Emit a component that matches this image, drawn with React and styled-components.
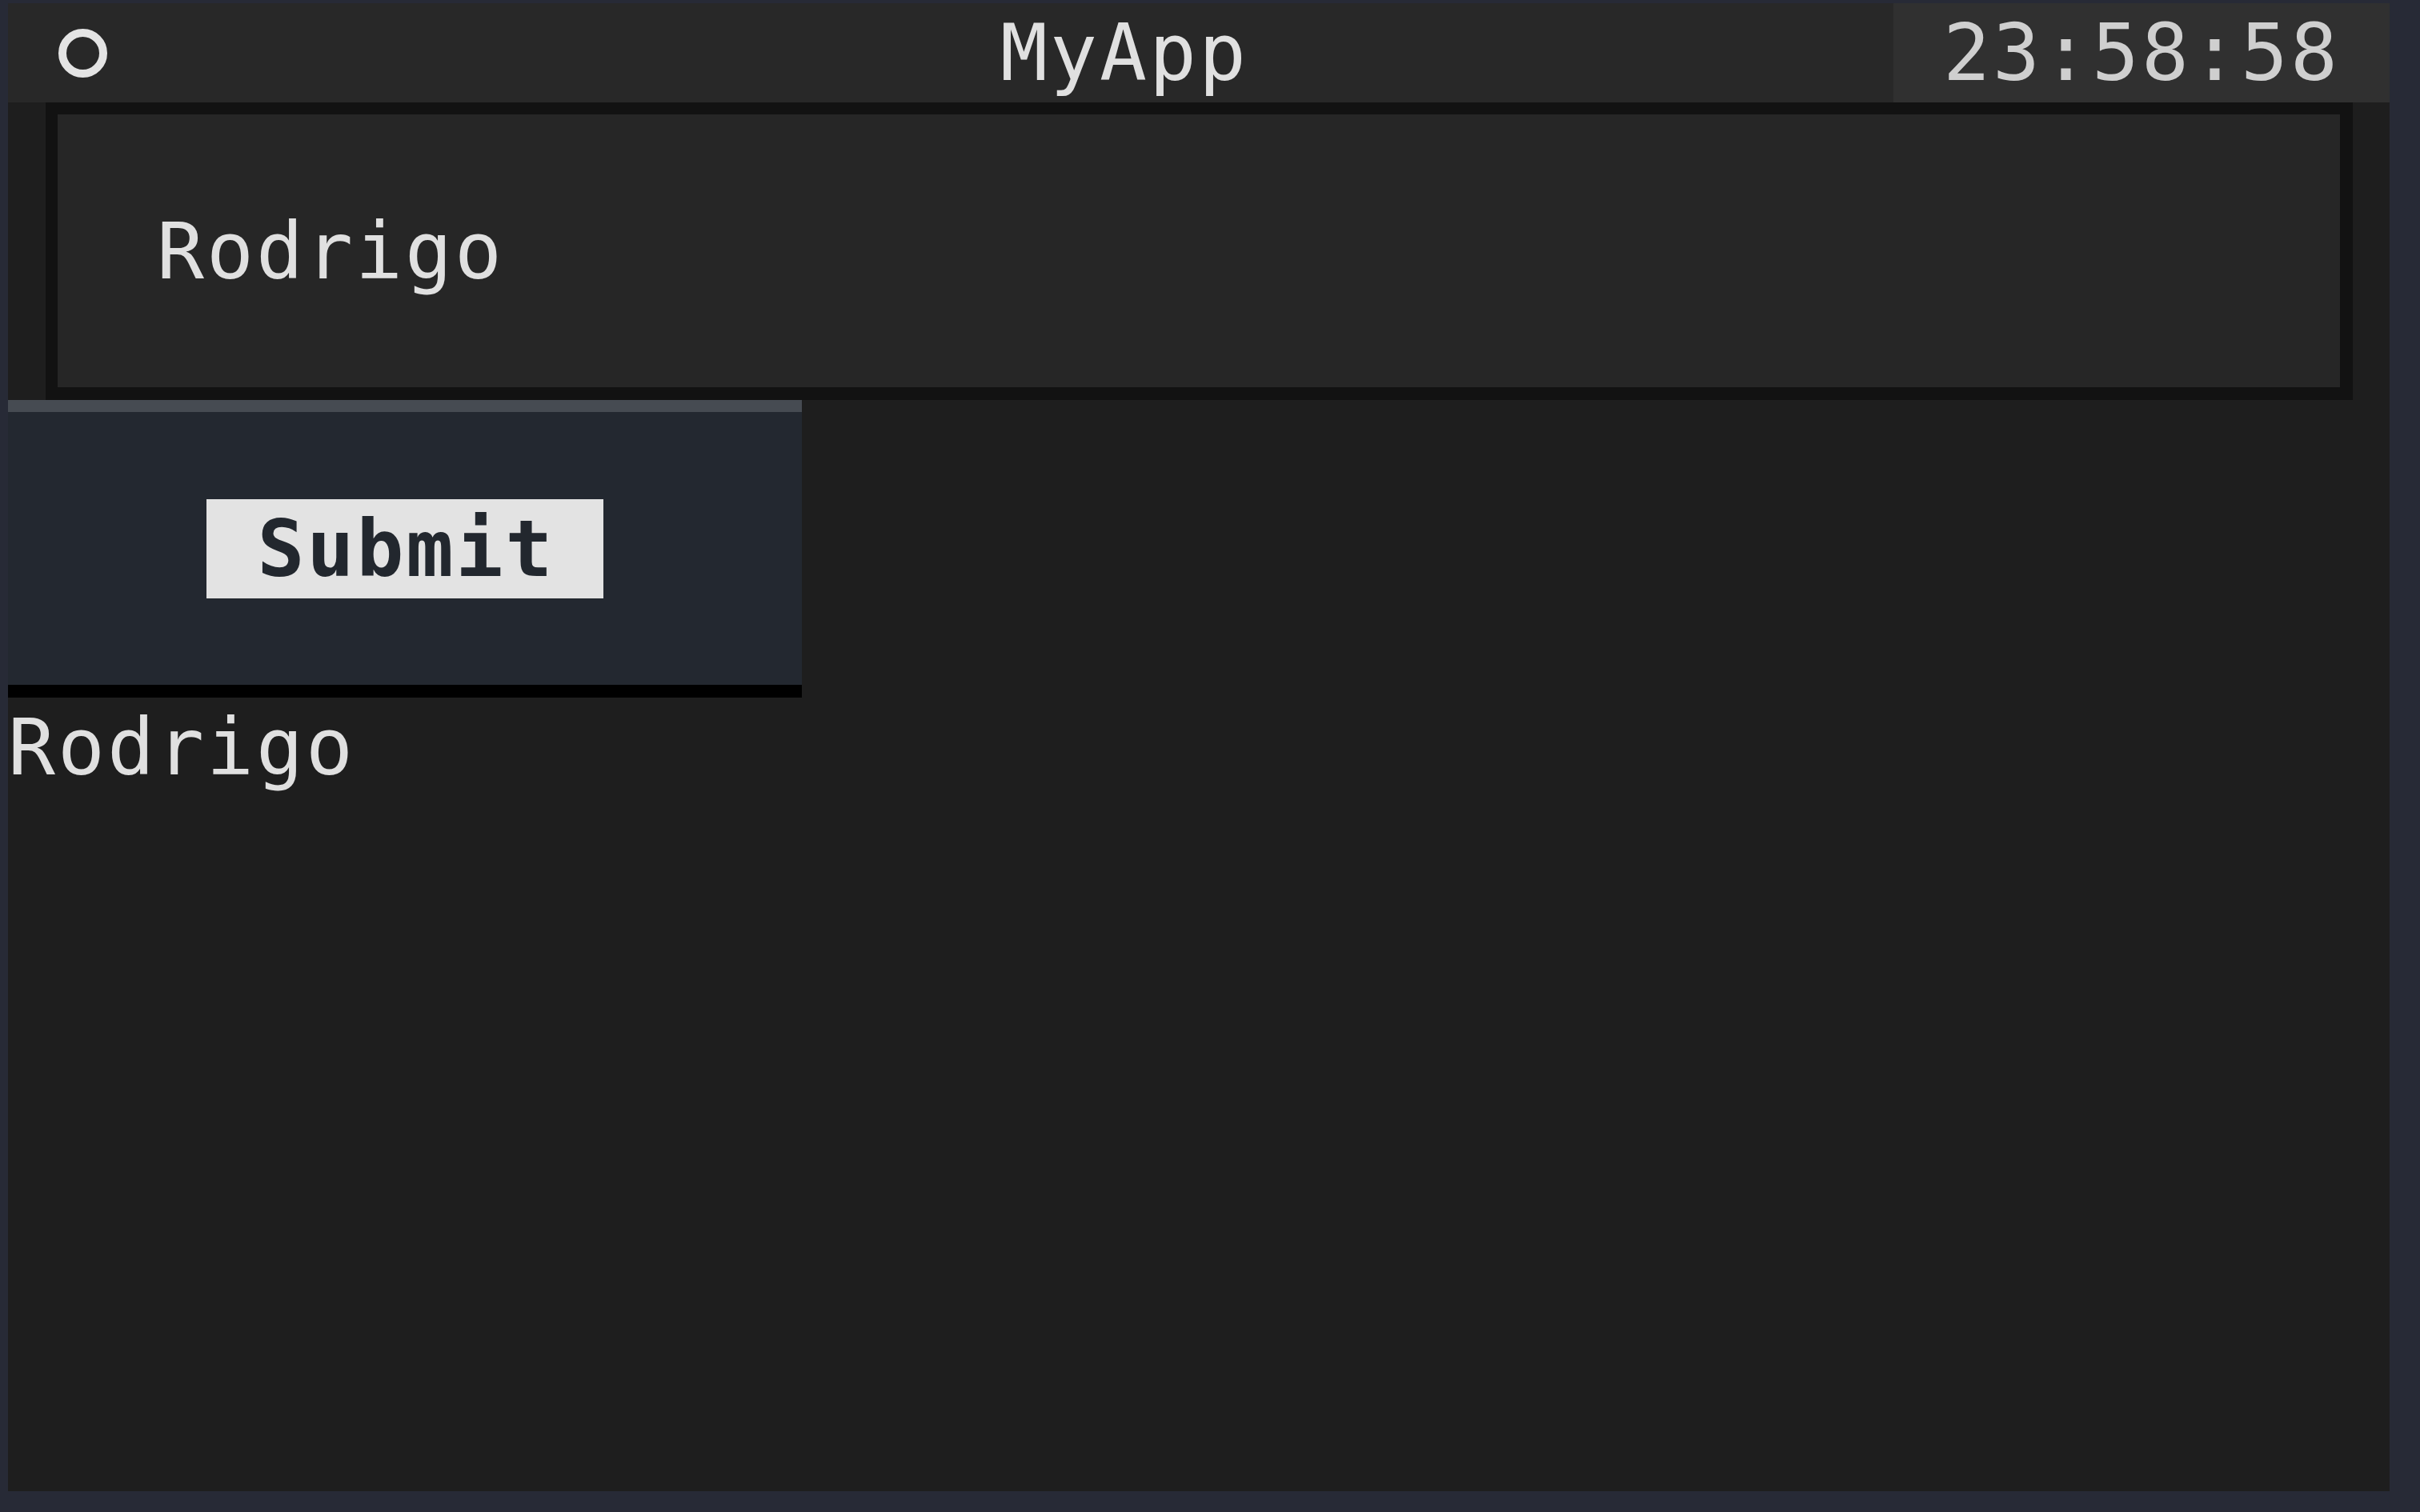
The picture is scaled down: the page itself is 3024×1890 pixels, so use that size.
import React from 'react';
import styled, { createGlobalStyle } from 'styled-components';

const CELL_W = 62;
const CELL_H = 124;

const GlobalStyle = createGlobalStyle`
   html, body {
      margin: 0;
      padding: 0;
      background-color: #272a36;
   }
   body {
      font-family: "DejaVu Sans Mono", "Liberation Mono", monospace;
   }
`;

const Frame = styled.div`
   padding: 4px 38px 26px 10px;
   width: 3024px;
   height: 1890px;
   box-sizing: border-box;
   overflow: hidden;
`;

const Screen = styled.main`
   width: 2976px;
   height: 1860px;
   background-color: #1e1e1e;
   color: #e0e0e0;
   font-size: 98px;
   letter-spacing: 3px;
   line-height: ${CELL_H}px;
   display: flex;
   flex-direction: column;
`;

const Header = styled.header`
   display: flex;
   align-items: stretch;
   height: ${CELL_H}px;
   flex-shrink: 0;
   background-color: #282828;
`;

const HeaderIcon = styled.div`
   width: ${CELL_W * 8}px;
   display: flex;
   align-items: center;
   padding-left: ${CELL_W + 1}px;
   box-sizing: border-box;
`;

const Ring = styled.span`
   width: 61px;
   height: 61px;
   border: 10px solid #e4e4e4;
   border-radius: 50%;
   box-sizing: border-box;
`;

const HeaderTitle = styled.div`
   flex: 1;
   text-align: center;
   padding-right: ${CELL_W}px;
   white-space: pre;
`;

const HeaderClock = styled.div`
   width: ${CELL_W * 10}px;
   background-color: #303030;
   color: #cfcfcf;
   text-align: center;
`;

const InputRow = styled.div`
   padding: 0 46px 0 47px;
`;

const TextInput = styled.input`
   display: block;
   width: 100%;
   height: ${CELL_H * 3}px;
   box-sizing: border-box;
   margin: 0;
   border-style: solid;
   border-color: #121212;
   border-width: 15px 16px 16px 15px;
   background-color: #262626;
   color: #e0e0e0;
   font-family: "DejaVu Sans Mono", "Liberation Mono", monospace;
   font-size: 98px;
   letter-spacing: 3px;
   line-height: ${CELL_H}px;
   padding: 0 ${CELL_W * 2}px 0 ${CELL_W * 2}px;
   outline: none;
`;

const ButtonBox = styled.div`
   width: ${CELL_W * 16}px;
   height: ${CELL_H * 3}px;
   box-sizing: border-box;
   background-color: #232830;
   border-top: 15px solid #464b52;
   border-bottom: 16px solid #000000;
   display: flex;
   align-items: center;
   justify-content: center;
`;

const Button = styled.button`
   border: none;
   margin: 0;
   padding: 0 ${CELL_W - 2}px 0 ${CELL_W + 1}px;
   background-color: #e3e3e3;
   color: #22272e;
   font-family: "DejaVu Sans Mono", "Liberation Mono", monospace;
   font-size: 98px;
   letter-spacing: 3px;
   font-weight: bold;
   line-height: ${CELL_H}px;
   height: ${CELL_H}px;
   cursor: pointer;
`;

const Label = styled.div`
   height: ${CELL_H}px;
   white-space: pre;
`;

const App = () => {
   return (
      <>
         <GlobalStyle />
         <Frame>
            <Screen>
               <Header>
                  <HeaderIcon>
                     <Ring />
                  </HeaderIcon>
                  <HeaderTitle>MyApp</HeaderTitle>
                  <HeaderClock>23:58:58</HeaderClock>
               </Header>
               <InputRow>
                  <TextInput type='text' value='Rodrigo' readOnly />
               </InputRow>
               <ButtonBox>
                  <Button type='button'>Submit</Button>
               </ButtonBox>
               <Label>Rodrigo</Label>
            </Screen>
         </Frame>
      </>
   )
}

export default App
